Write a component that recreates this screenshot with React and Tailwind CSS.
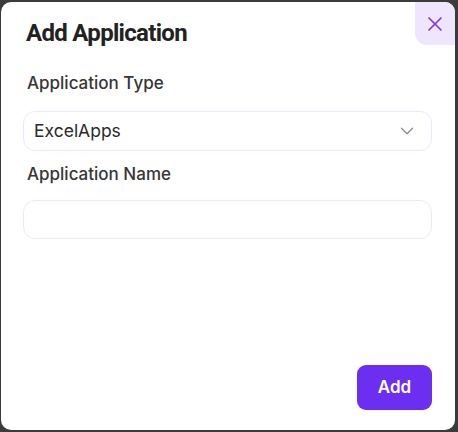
import { X, ChevronDown } from "lucide-react";

export default function App() {
  return (
    <div className="w-[458px] h-[432px] bg-[#3b3b3b] pt-[2px] pl-[1px] pr-[3px] pb-[2px]">
      <div className="relative h-full bg-white rounded-[10px] overflow-hidden flex flex-col pl-[22px] pr-[23px] font-['Inter',sans-serif]">
        <button className="absolute top-0 right-0 w-[40px] h-[43px] bg-[#efe6fd] rounded-bl-[12px] flex items-center justify-center text-[#7c3aed]">
          <X size={24} strokeWidth={1.7} />
        </button>

        <h2 className="mt-[16px] pl-[3px] text-[24px] leading-[30px] font-bold tracking-[-0.7px] text-[#222] font-['Roboto',sans-serif]">
          Add Application
        </h2>

        <label className="mt-[25px] pl-[4px] text-[17px] leading-[20px] font-medium text-[#363636]">Application Type</label>
        <div className="mt-[18px] h-[40px] rounded-[12px] border border-[#ece8fc] flex items-center justify-between pl-[10px] pr-[13px]">
          <span className="text-[17.5px] text-[#2a2a2a]">ExcelApps</span>
          <ChevronDown size={22} strokeWidth={1.4} className="text-[#8a8a8a]" />
        </div>

        <label className="mt-[13px] pl-[4px] text-[17px] leading-[20px] font-medium text-[#363636]">Application Name</label>
        <input className="mt-[16px] h-[39px] rounded-[12px] border border-[#ece8fc] px-[10px] outline-none text-[17px]" />

        <div className="mt-auto mb-[20px] flex justify-end">
          <button className="w-[75px] h-[45px] rounded-[9px] bg-[#6c2ff2] text-white text-[17px] font-semibold">
            Add
          </button>
        </div>
      </div>
    </div>
  );
}
